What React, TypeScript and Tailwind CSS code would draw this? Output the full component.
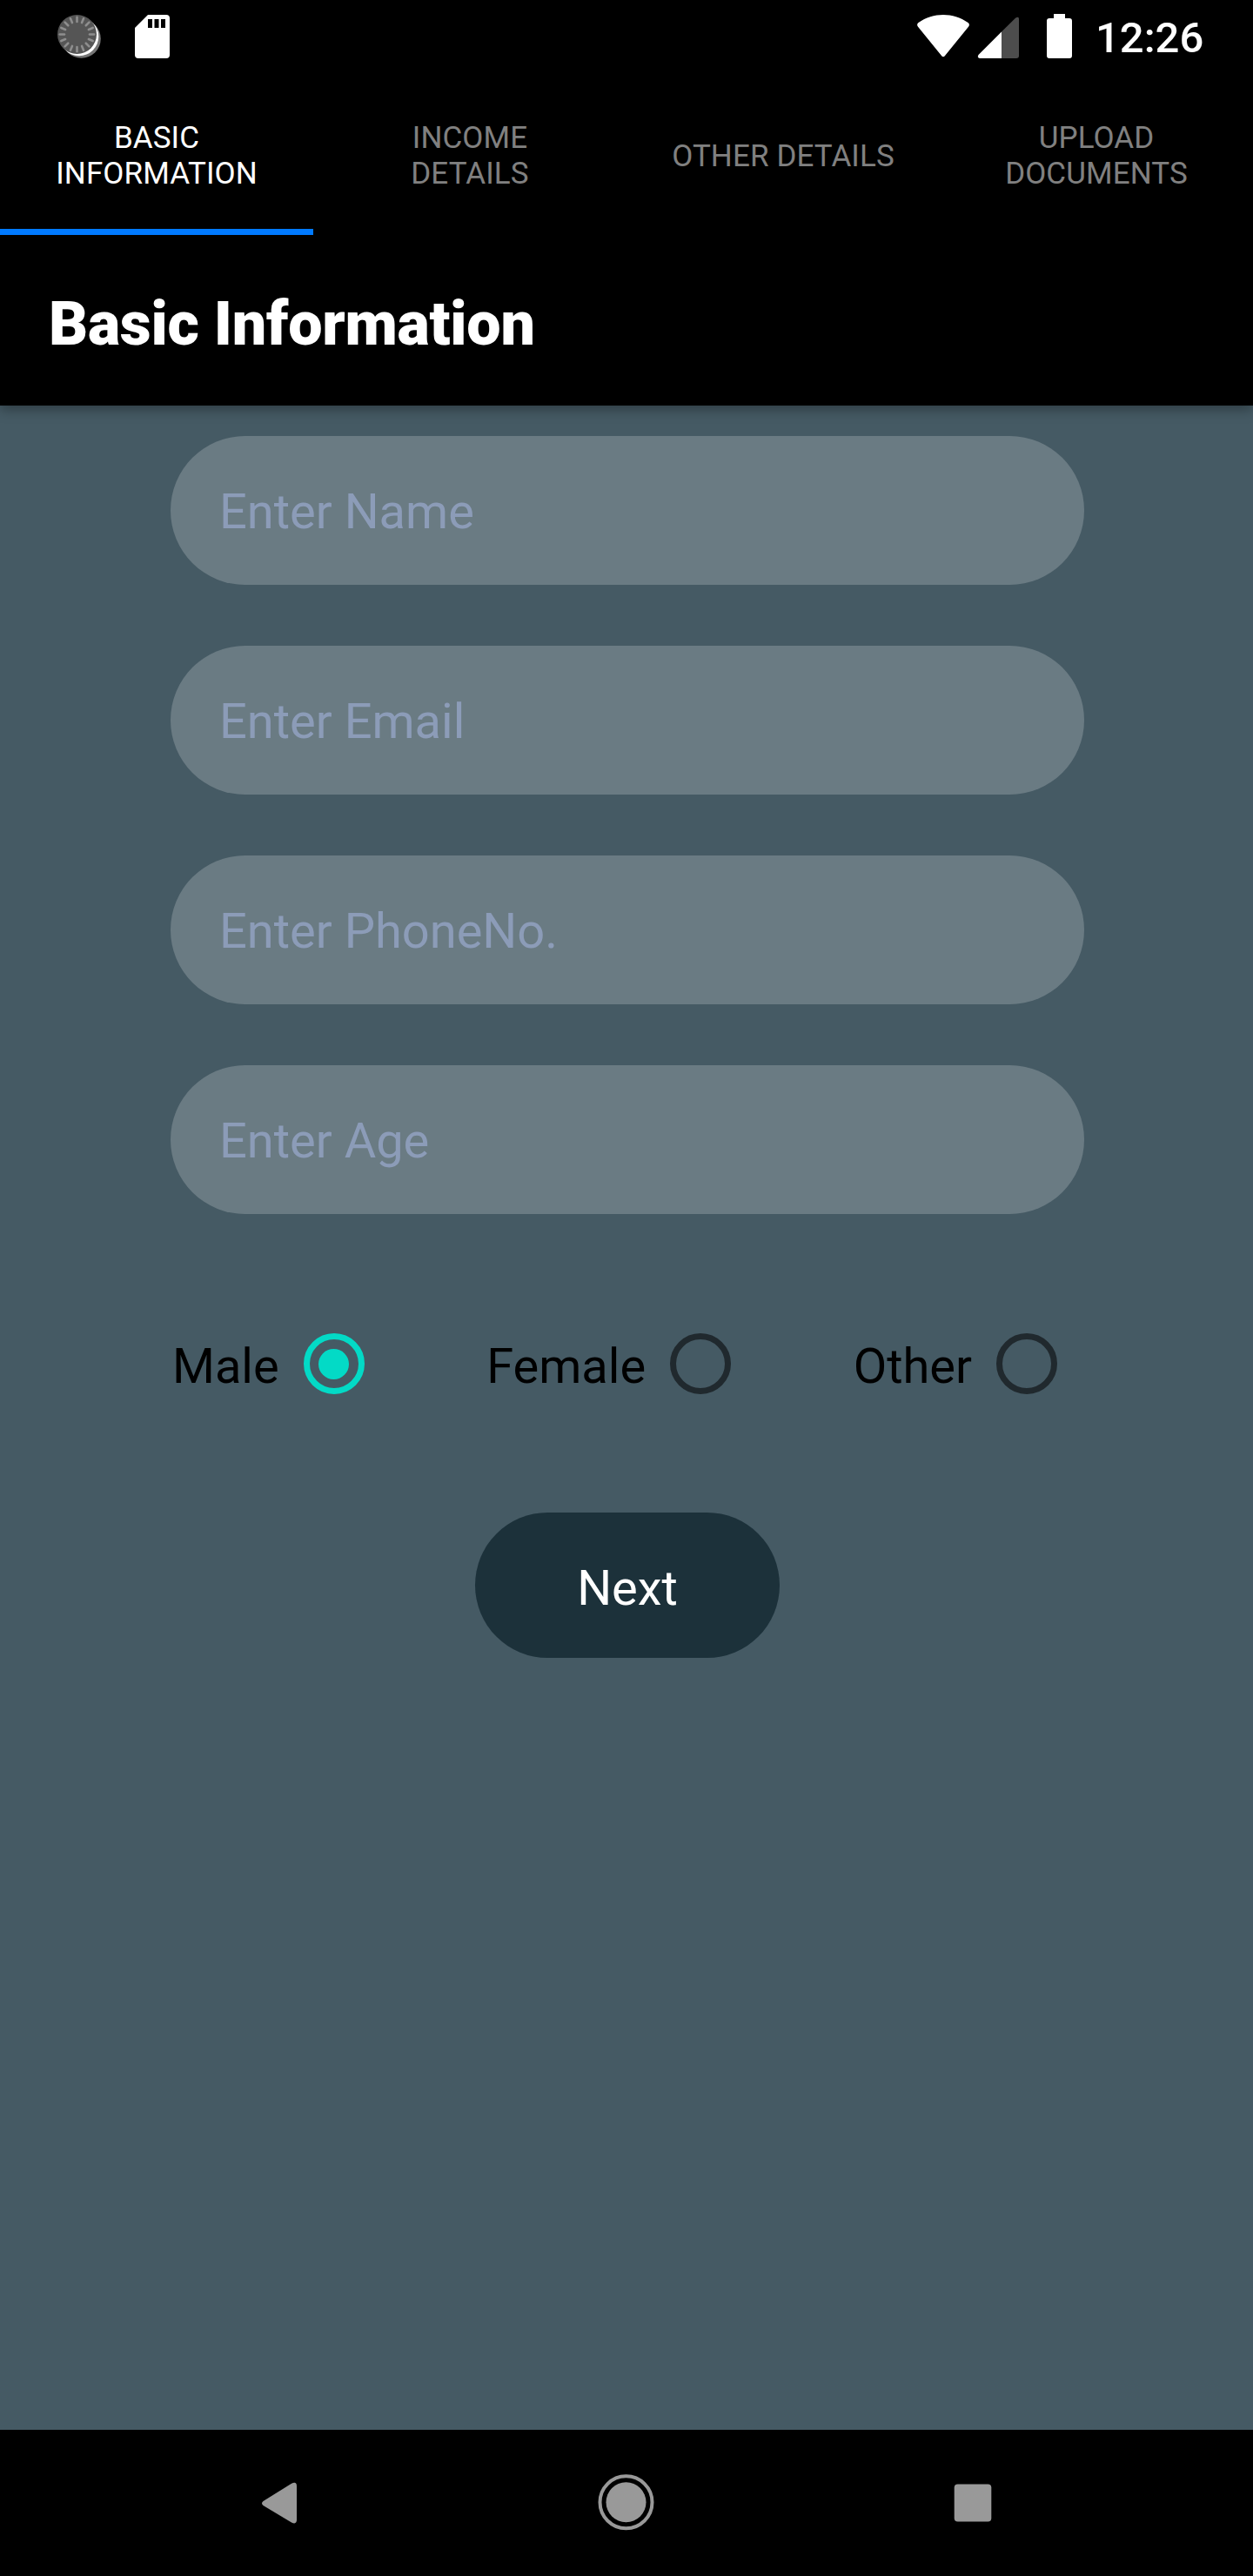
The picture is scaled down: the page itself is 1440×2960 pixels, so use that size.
import { useState } from "react";

const tabs = [["BASIC", "INFORMATION"], ["INCOME", "DETAILS"], ["OTHER DETAILS"], ["UPLOAD", "DOCUMENTS"]];
const fields = ["Enter Name", "Enter Email", "Enter PhoneNo.", "Enter Age"];

function StatusBar() {
  const ticks = Array.from({ length: 16 }, (_, i) => i * 22.5);
  return (
    <div className="flex h-[84px] shrink-0 justify-between">
      <svg width="240" height="84" viewBox="0 0 240 84">
        <circle cx="93.5" cy="44.5" r="22.3" fill="#757575" />
        <circle cx="91" cy="42" r="22.3" fill="#fff" />
        <circle cx="88.5" cy="39.5" r="22.5" fill="#555" />
        <g stroke="#8e8e8e" strokeWidth="2.6" strokeLinecap="round">
          {ticks.map((a) => (
            <line key={a} x1="88.5" y1="19.8" x2="88.5" y2="25" transform={`rotate(${a} 88.5 39.5)`} />
          ))}
        </g>
        <path d="M170 17h21q4 0 4 4v42q0 4-4 4h-32q-4 0-4-4V32z" fill="#fff" />
        <path d="M170 22h5v10h-5zM177.5 22h5v10h-5zM185 22h5v10h-5z" fill="#000" />
      </svg>
      <div className="flex">
        <svg width="205" height="84" viewBox="1040 0 205 84">
          <path d="M1055.5 26C1064 20 1074 17 1084 17s20 3 28.500 9q2.500 2 .5 4.700L1086 64q-2 2.500-4 0L1055 30.700q-2-2.700.5-4.700z" fill="#fff" />
          <path d="M1151 36.500L1167 20.800q4-2.500 4 1.200v42q0 3-3 3h-17z" fill="#4d4d4d" />
          <path d="M1151 36.500V67h-25q-3.500-1-1.500-4z" fill="#fff" />
          <path d="M1211 16h13v5h5q3 0 3 3v40q0 3-3 3h-23q-3 0-3-3V24q0-3 3-3h5z" fill="#fff" />
        </svg>
        <span className="w-[195px] pt-[15px] pl-[14px] text-[49px] leading-[58px] font-medium whitespace-nowrap">12:26</span>
      </div>
    </div>
  );
}

export default function App() {
  const [tab, setTab] = useState(0);
  const [gender, setGender] = useState("Male");
  return (
    <div className="flex h-[2960px] w-[1440px] flex-col overflow-hidden bg-[#455a64] font-[Roboto,sans-serif]">
      <header className="relative flex h-[466px] shrink-0 flex-col bg-black text-white shadow-[0_4px_14px_rgba(0,0,0,0.36)]">
        <StatusBar />
        <nav className="grid h-[186px] shrink-0 grid-cols-4">
          {tabs.map((lines, i) => (
            <button
              key={lines[0]}
              onClick={() => setTab(i)}
              className={`flex flex-col items-center justify-center border-b-[7px] pt-[11px] text-[35px] leading-[41px] tracking-[0.1px] ${i === tab ? "border-[#007aff] text-white" : "border-transparent text-[#808080]"}`}
            >
              {lines.map((l) => (
                <span key={l}>{l}</span>
              ))}
            </button>
          ))}
        </nav>
        <h1 className="flex h-[196px] items-center pt-[8px] pl-14 text-[70px] leading-[82px] font-black tracking-[-0.25px]">Basic Information</h1>
      </header>

      <main className="flex grow flex-col items-center pt-[35px]">
        <form className="ml-[2px] flex w-[1050px] flex-col gap-[70px]">
          {fields.map((f) => (
            <input
              key={f}
              placeholder={f}
              className="h-[171px] rounded-full bg-white/20 px-14 pt-[3px] text-[56px] text-black outline-none placeholder:text-[#8c9cb8] placeholder:opacity-100"
            />
          ))}
        </form>
        <div className="mt-[137px] ml-[6px] flex h-[70px] w-[1050px] items-center">
          {["Male", "Female", "Other"].map((g) => (
            <button key={g} onClick={() => setGender(g)} className="mr-[140.500px] flex items-center text-[56px] leading-[66px] text-black">
              <span className="mr-7 pt-[5px]">{g}</span>
              <span className={`flex size-[70px] items-center justify-center rounded-full border-[7px] ${g === gender ? "border-[#03dac6]" : "border-[#20292e]"}`}>
                {g === gender && <span className="size-[35px] rounded-full bg-[#03dac6]" />}
              </span>
            </button>
          ))}
        </div>
        <button className="mt-[136px] ml-[2px] flex h-[167px] w-[350px] items-center justify-center rounded-full bg-[#1c313a] pt-[7px] text-[56px] leading-[66px] text-white">
          Next
        </button>
      </main>

      <footer className="flex h-[168px] shrink-0 items-center justify-center bg-black">
        <svg width="920" height="168" viewBox="260 2792 920 168" fill="#999">
          <path d="M302.500 2874L335 2853.800q6-3 6 3v38.500q0 6-6 3.200L302.500 2879q-3-2.500 0-5z" />
          <circle cx="719.500" cy="2875.300" r="30" fill="none" stroke="#999" strokeWidth="4" />
          <circle cx="719.500" cy="2875.300" r="23" />
          <rect x="1096.700" y="2854.500" width="42.600" height="43" rx="4" />
        </svg>
      </footer>
    </div>
  );
}
